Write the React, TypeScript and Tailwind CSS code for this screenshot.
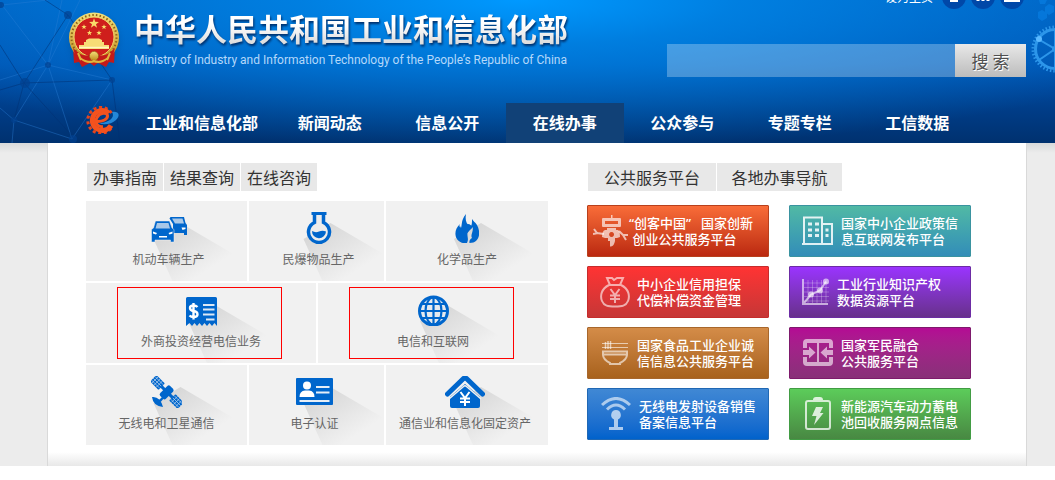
import type { ReactNode } from "react";
import clsx from "clsx";

const BLUE = "#0066cc";

/* ---------- header drawings ---------- */

const star = (cx: number, cy: number, r: number) =>
    Array.from({ length: 10 }, (_, i) => {
        const radius = i % 2 ? r * 0.4 : r;
        const a = (Math.PI / 5) * i - Math.PI / 2;
        return `${(cx + radius * Math.cos(a)).toFixed(2)},${(cy + radius * Math.sin(a)).toFixed(2)}`;
    }).join(" ");

const Emblem = () => (
    <svg width="52" height="56" viewBox="0 0 52 56" className="shrink-0 drop-shadow-md" aria-hidden="true">
        <defs>
            <linearGradient id="gold" x1="0" y1="0" x2="0" y2="1">
                <stop offset="0" stopColor="#f3e07a" />
                <stop offset="1" stopColor="#c08a1c" />
            </linearGradient>
        </defs>
        <path d="M5 36 L6 51 L11 50 L14 55 L22 51 L26 54 L30 51 L38 55 L41 50 L46 51 L47 36 Z" fill="#c41a1a" />
        <circle cx="26" cy="25.500" r="25" fill="url(#gold)" />
        <circle cx="26" cy="25.500" r="22.500" fill="none" stroke="#8f6414" strokeWidth="2" strokeDasharray="1.500 2.200" />
        <circle cx="26" cy="25" r="20" fill="#cf1f1c" stroke="#f0d468" strokeWidth="1" />
        <polygon points={star(26, 11.5, 5.2)} fill="#f8dc6a" />
        <polygon points={star(16, 15, 2.8)} fill="#f8dc6a" />
        <polygon points={star(36, 15, 2.8)} fill="#f8dc6a" />
        <polygon points={star(21.5, 21, 2.8)} fill="#f8dc6a" />
        <polygon points={star(31, 21, 2.8)} fill="#f8dc6a" />
        <path d="M18 28 L21 26.500 H31 L34 28 V30 H36 V33 H41 V37 H11 V33 H16 V30 H18 Z" fill="#f7dc76" />
        <path d="M11 35.500 H41" stroke="#fff6c0" strokeWidth="1.500" />
        <path d="M5 36 Q16 47 22 42 Q26 38 30 42 Q36 47 47 36 L45 43 Q36 51 26 48 Q16 51 7 43 Z" fill="#c41a1a" />
        <circle cx="26" cy="44" r="4.500" fill="url(#gold)" stroke="#8f6414" strokeWidth="1" strokeDasharray="1 1" />
        <path d="M12 46 Q20 52 26 49 Q32 52 40 46" fill="none" stroke="#e0b53e" strokeWidth="2" />
        <path d="M10 41 L13 48 M42 41 L39 48" stroke="#e0b53e" strokeWidth="2" />
    </svg>
);

const GearLogo = () => (
    <svg width="33" height="28" viewBox="0 0 33 28" fill="none" aria-hidden="true">
        <path d="M25.500 7 A13 13 0 1 0 26 21" stroke="#e8441a" strokeWidth="3" strokeDasharray="3 2.600" />
        <path d="M23 7 A10 10 0 1 0 25 19.500" stroke="#f4521e" strokeWidth="5" />
        <path d="M10 15.500 C17 16 22 13 21.500 9.500 C21 6.500 14 6 11 11.500 C8 17 12 21.500 17 20.500" stroke="#f4521e" strokeWidth="3" />
        <path d="M26 6 C34 5 34 10 30 14 C26 18 19 19 13 17.500 C21 17 30 12.500 26 6 Z" fill="#2387d8" />
    </svg>
);

const NetworkLines = () => (
    <svg className="absolute left-0 top-0 h-full" width="140" viewBox="0 0 140 143" aria-hidden="true">
        <g fill="none" stroke="#2a80d8" strokeOpacity="0.400">
            <path d="M2 5 L48 65 L80 0 M0 80 L48 65 L62 0 M48 65 L14 120 L0 108 M14 120 L72 139 L48 65 L112 80 L72 139 M2 5 L48 0 M14 120 L12 143" />
        </g>
        <g fill="none" stroke="#012f72" strokeOpacity="0.500">
            <path d="M24 83 L68 15 L45 0 M24 83 L0 45 M24 83 L0 90 M24 83 L112 80 L68 15 M24 83 L75 139 M24 83 L14 120 M112 80 L120 143" />
        </g>
        <g fill="#01408f" fillOpacity="0.700">
            <circle cx="25" cy="83" r="5" />
            <circle cx="68" cy="15" r="4" />
            <circle cx="48" cy="65" r="3" />
            <circle cx="14" cy="120" r="3" />
            <circle cx="112" cy="80" r="3" />
            <circle cx="73" cy="139" r="4" />
            <circle cx="1" cy="5" r="3" />
        </g>
    </svg>
);

const GearDecor = () => (
    <svg className="absolute right-0 top-0" width="30" height="80" viewBox="0 0 30 80" aria-hidden="true">
        <g fill="#0a8af0" fillOpacity="0.450">
            <path d="M20 7 l4 -3 l5 2 v6 l-5 3 l-4 -3 Z M13 12 l4 -2 l5 3 v5 l-5 3 l-4 -3 Z M14 0 h8 l-2 4 h-5 Z" />
        </g>
        <g fill="none" stroke="#2c96ea">
            <circle cx="30" cy="49" r="22" strokeWidth="3" strokeDasharray="1.500 1.960" />
            <circle cx="30" cy="49" r="19.500" strokeWidth="3" />
            <path d="M30 49 L13 39 M30 49 L14 60 M30 30 V68" strokeWidth="2" />
        </g>
        <circle cx="30" cy="49" r="3" fill="#2c96ea" />
        <circle cx="14" cy="39" r="3" fill="#5ab8ff" />
    </svg>
);

/* ---------- service icons ---------- */

const CarsIcon = () => (
    <svg width="36" height="32" viewBox="0 0 36 32">
        <path d="M19.500 5 H33 L34.500 11 L36 13 V23 H33 V21 H22 V12 L18.500 6.500 Z" fill={BLUE} />
        <path d="M21 6.500 H31.500 L33 11.500 H24 Z" fill="#a9c8e8" />
        <path d="M30.500 15.500 H34.500 V17 L31.500 18 Z" fill="#fff" />
        <path d="M4.500 9 H18.500 L21 16 L23 17.500 V30 H19.500 V28 H4 V30 H.500 V17.500 L2.500 16 Z" fill={BLUE} stroke="#f1f1f1" strokeWidth="0.500" />
        <path d="M6 11 H17.500 L19 16.500 H4.500 Z" fill="#a9c8e8" />
        <path d="M2 19.500 L6 21 L5 22.500 L2 21.500 Z M21.500 19.500 L17.500 21 L18.500 22.500 L21.500 21.500 Z M8 24 H16 V25.500 H8 Z" fill="#fff" />
    </svg>
);

const FlaskIcon = () => (
    <svg width="26" height="32" viewBox="0 0 26 32">
        <path d="M8.500 2 V10.500 A10.500 10.500 0 1 0 17.500 10.500 V2" fill="#ececec" stroke={BLUE} strokeWidth="3.500" />
        <path d="M5.500 0 H20.500 V3 H5.500 Z" fill={BLUE} />
        <path d="M6 19 Q9.500 21 13 19.500 Q16.500 18 20 19.500 A7 7 0 0 1 6 19 Z" fill={BLUE} />
    </svg>
);

const FlameIcon = () => (
    <svg width="24" height="32" viewBox="0 0 24 32">
        <path
            d="M11 2 C5 9 8 14 5 18 C4 16 4 14 5 12 C-2 18 -1 29 8 31 L12 31 C14 27 12 25 12.500 21 C15 17 17 17 17.500 15 C19 19 15 23 17 26 C15 27 14 29 14.500 31 C25 31 26 20 22 13 C20 10 18 9 17 7 C17 11 17 13 15.500 15 C11 12 10 8 11 2 Z"
            fill={BLUE}
        />
        <path d="M5 14 C-1 19 0 29 8 30.500 H11 C13 27 11.500 25 12 21 C15 17 17 17 17 14 L14 12 L8 13 L7 18 Z" fill={BLUE} />
    </svg>
);

const ReceiptIcon = () => (
    <svg width="31" height="32" viewBox="0 0 31 32">
        <path d="M1.500 3 H29.500 Q31 3 31 4.500 V32 L28.500 29 L26 32 L23.500 29 L21 32 L18.500 29 L16 32 L13.500 29 L11 32 L8.500 29 L6 32 L3.500 29 L0 32 V4.500 Q0 3 1.500 3 Z" fill={BLUE} />
        <path d="M11.500 13 Q10 11.500 7.500 11.500 Q4 11.500 4 14 Q4 16.500 7.500 17 Q11.500 17.500 11.500 20.500 Q11.500 23 7.500 23 Q5 23 3.500 21.500 M7.500 9 V25.500" fill="none" stroke="#fff" strokeWidth="2.400" />
        <path d="M17 11 H28.500 M17 15.500 H28.500 M17 20.500 H28.500 M20 25.500 H28.500" stroke="#dbe8f5" strokeWidth="2" />
    </svg>
);

const GlobeIcon = () => (
    <svg width="31" height="32" viewBox="0 0 31 32">
        <circle cx="15.500" cy="17" r="14" fill="#e6eaee" stroke={BLUE} strokeWidth="3" />
        <g fill="none" stroke={BLUE} strokeWidth="2.200">
            <ellipse cx="15.500" cy="17" rx="8" ry="13.500" />
            <path d="M15.500 3 V31 M2 17 H29 M4 10 H27 M4 24 H27" />
        </g>
    </svg>
);

const SatelliteIcon = () => (
    <svg width="31" height="32" viewBox="0 0 31 32">
        <g transform="rotate(45 16 16)">
            <rect x="-3.500" y="11.500" width="12" height="9" rx="1" fill={BLUE} />
            <rect x="23.500" y="11.500" width="12" height="9" rx="1" fill={BLUE} />
            <path d="M-3.500 13.500 H8.500 M-3.500 16 H8.500 M-3.500 18.500 H8.500 M-1 11.500 V20.500 M2 11.500 V20.500 M5 11.500 V20.500 M23.500 13.500 H35.500 M23.500 16 H35.500 M23.500 18.500 H35.500 M26.500 11.500 V20.500 M29.500 11.500 V20.500 M32.500 11.500 V20.500" stroke="#b9d3ee" strokeWidth="0.700" />
            <path d="M8 16 H24" stroke={BLUE} strokeWidth="3" />
            <rect x="12" y="9.500" width="8" height="14" rx="2" fill={BLUE} />
        </g>
        <path d="M1 21 Q9 20 12 31 Q2 30 1 21 Z M6 26 L12 20 L13.500 21.500 L8 28 Z" fill={BLUE} />
    </svg>
);

const IdCardIcon = () => (
    <svg width="37" height="32" viewBox="0 0 37 32">
        <rect y="2" width="37" height="27" rx="1" fill={BLUE} />
        <circle cx="11" cy="9.500" r="4" fill="#fff" />
        <path d="M3.500 21 Q3.500 15 9 14.500 H13 Q18.500 15 18.500 21 Z" fill="#fff" />
        <path d="M20 11 H33.500 M20 16.500 H33.500 M3.500 25 H33.500" stroke="#e6eef7" strokeWidth="2" />
    </svg>
);

const HouseIcon = () => (
    <svg width="40" height="32" viewBox="0 0 40 32">
        <path d="M2.500 18 L18 3 Q20 1 22 3 L37.500 18" fill="none" stroke={BLUE} strokeWidth="5" strokeLinecap="round" />
        <path d="M5 21 L20 8 L35 21 V30 Q35 32 33 32 H7 Q5 32 5 30 Z" fill={BLUE} />
        <path d="M4 23 L18.500 10.500 Q20 9 21.500 10.500 L36 23" fill="none" stroke="#f1f1f1" strokeWidth="1.500" />
        <path d="M15.500 16 L20 22 L24.500 16 M20 22 V30 M15 22.500 H25 M15 26 H25" fill="none" stroke="#fff" strokeWidth="2" />
    </svg>
);

/* ---------- platform icons ---------- */

const RobotIcon = () => (
    <svg width="36" height="32" viewBox="0 0 36 32">
        <path
            d="M18 0 h1.500 v3 H27 q1 0 1 1 v7 q0 1 -1 1 H10 q-1 0 -1 -1 V4 q0 -1 1 -1 h8 Z M12 6 v3 h13 V6 Z"
            fill="#fff"
            fillOpacity="0.650"
            fillRule="evenodd"
        />
        <path
            d="M14 13 h9 v2 h2 q2 1 2 7 l-3 1 h-2 v3 q-1 5 -4 5.500 h-1 V26 h-2 v-3 h-3 l-3 -1 q0 -6 3 -7 h2 Z M18.500 17 a2.500 2.500 0 1 0 .1 0 Z"
            fill="#fff"
            fillOpacity="0.650"
            fillRule="evenodd"
        />
        <path d="M11 19 L4 18 L1 14 M5 18 L0 19 M26 16 L30 20 L35 20 M30 20 L33 25" fill="none" stroke="#fff" strokeOpacity="0.650" strokeWidth="2" />
    </svg>
);

const BuildingIcon = () => (
    <svg width="32" height="30" viewBox="0 0 32 30" fill="none" stroke="#fff">
        <path d="M0 28 H31 M2 28 V1.500 H20 V28 M20 8 H30 V28" strokeWidth="2" strokeOpacity="0.850" />
        <path d="M6 8 h4 m3 0 h4 M6 14 h4 m3 0 h4 M6 19.500 h4 m3 0 h4 M23.500 14 h3 M23.500 19.500 h3" strokeWidth="3" strokeOpacity="0.850" />
    </svg>
);

const MoneyBagIcon = () => (
    <svg width="30" height="32" viewBox="0 0 30 32" fill="none" stroke="#fff" strokeOpacity="0.600" strokeWidth="2">
        <path d="M9 9 C1 13 0 20 2 25 C4 30 8 30.500 15 30.500 C22 30.500 26 30 28 25 C30 20 29 13 21 9 Z M10 9 L7 2 H12 L14 4 L17 2 H23 L20 9" />
        <path d="M10.500 13 L15 19 L19.500 13 M15 19 V27 M10 19.500 H20 M10 23 H20" />
    </svg>
);

const ChartIcon = () => (
    <svg width="28" height="28" viewBox="0 0 28 28" fill="none" stroke="#fff">
        <path d="M6 2 V25 M10.500 2 V25 M15 2 V25 M19.500 2 V25 M24 2 V25 M2 5 H27 M2 9.500 H27 M2 14 H27 M2 18.500 H27 M2 23 H27" strokeOpacity="0.250" />
        <path d="M1 1 V26 H26 M2 25 L9 16.500 L18 12.500 L24 3.500" strokeOpacity="0.600" strokeWidth="2" />
        <g fill="#fff" fillOpacity="0.600" stroke="none">
            <circle cx="9" cy="16.500" r="3" />
            <circle cx="18" cy="12.500" r="3" />
            <circle cx="24" cy="3.500" r="3" />
        </g>
    </svg>
);

const BowlIcon = () => (
    <svg width="28" height="26" viewBox="0 0 28 26" fill="none" stroke="#fff" strokeOpacity="0.600">
        <path d="M1 3.500 H27 M1 7.500 H27" strokeWidth="1.200" />
        <path d="M4.500 9 V2 M7 9 V1 M9.500 9 V1" strokeWidth="1.500" />
        <path d="M2 11.500 H26 V14.500 H2 Z M2 14.500 C2 19 5 21 9 23 V24 H19 V23 C23 21 26 19 26 14.500" strokeWidth="2" />
    </svg>
);

const MergeIcon = () => (
    <svg width="30" height="28" viewBox="0 0 30 28">
        <path d="M2 9 V4 Q2 2 4 2 H26 Q28 2 28 4 V9 M2 18 V23 Q2 25 4 25 H26 Q28 25 28 23 V18" fill="none" stroke="#fff" strokeOpacity="0.600" strokeWidth="4" />
        <path d="M14 4 h2 v19 h-2 Z M0 11 H6 V7.500 L12.500 13.500 L6 19.500 V16 H0 Z M30 11 H24 V7.500 L17.500 13.500 L24 19.500 V16 H30 Z" fill="#fff" fillOpacity="0.600" />
    </svg>
);

const SignalIcon = () => (
    <svg width="30" height="34" viewBox="0 0 30 34">
        <path d="M1 8 Q15 -5 29 8 M6 12.500 Q15 3.500 24 12.500" fill="none" stroke="#fff" strokeOpacity="0.600" strokeWidth="3" />
        <path d="M15 13 a5 5 0 0 1 2 9.500 V30 H22 V33 H8 V30 H13 V22.500 A5 5 0 0 1 15 13 Z" fill="#fff" fillOpacity="0.650" />
    </svg>
);

const BatteryIcon = () => (
    <svg width="26" height="34" viewBox="0 0 26 34">
        <rect x="1" y="4" width="24" height="28" rx="2" fill="none" stroke="#fff" strokeOpacity="0.750" strokeWidth="2" />
        <path d="M8 3 Q8 0 11 0 H15 Q18 0 18 3 Z M11 10 H18 L15 16 H18.500 L9 28 L11.500 19 H7 Z" fill="#fff" fillOpacity="0.800" />
    </svg>
);

/* ---------- data ---------- */

const navItems = ["新闻动态", "信息公开", "在线办事", "公众参与", "专题专栏", "工信数据"];

type Service = { label: string; icon: ReactNode; size: string; box?: string };

const serviceRows: Service[][] = [
    [
        { label: "机动车辆生产", icon: <CarsIcon />, size: "w-[161px] pl-1" },
        { label: "民爆物品生产", icon: <FlaskIcon />, size: "w-[135px] pl-1" },
        { label: "化学品生产", icon: <FlameIcon />, size: "flex-1" },
    ],
    [
        { label: "外商投资经营电信业务", icon: <ReceiptIcon />, size: "flex-1 pr-1", box: "border-[#ff0000] pl-1" },
        { label: "电信和互联网", icon: <GlobeIcon />, size: "flex-1 pr-1", box: "border-[#ff0000] pl-1" },
    ],
    [
        { label: "无线电和卫星通信", icon: <SatelliteIcon />, size: "w-[161px]" },
        { label: "电子认证", icon: <IdCardIcon />, size: "w-[135px] pr-1" },
        { label: "通信业和信息化固定资产", icon: <HouseIcon />, size: "flex-1 pr-1" },
    ],
];

const platforms = [
    { lines: ["“创客中国”\u00a0\u00a0\u00a0国家创新", "\u00a0创业公共服务平台"], icon: <RobotIcon />, tone: "from-[#f96c38] to-[#bb2810] border-[#b8401c]", space: "w-9" },
    { lines: ["国家中小企业政策信", "息互联网发布平台"], icon: <BuildingIcon />, tone: "from-[#51b9a4] to-[#338db8] border-[#3a93a0]", space: "w-[46px]" },
    { lines: ["中小企业信用担保", "代偿补偿资金管理"], icon: <MoneyBagIcon />, tone: "from-[#ff3333] to-[#c63636] border-[#c62c2c]", space: "w-[44px]" },
    { lines: ["工业行业知识产权", "数据资源平台"], icon: <ChartIcon />, tone: "from-[#9a33ff] to-[#68308c] border-[#6c2ca4]", space: "w-[42px]" },
    { lines: ["国家食品工业企业诚", "信信息公共服务平台"], icon: <BowlIcon />, tone: "from-[#d48c48] to-[#a8621c] border-[#a8672c]", space: "w-[44px]" },
    { lines: ["国家军民融合", "公共服务平台"], icon: <MergeIcon />, tone: "from-[#b40a94] to-[#883078] border-[#7e1a6c]", space: "w-[46px]" },
    { lines: ["无线电发射设备销售", "备案信息平台"], icon: <SignalIcon />, tone: "from-[#4088d4] to-[#0062cc] border-[#2068b4]", space: "w-[46px]" },
    { lines: ["新能源汽车动力蓄电", "池回收服务网点信息"], icon: <BatteryIcon />, tone: "from-[#5ccc5a] to-[#488842] border-[#429c44]", space: "w-[46px]" },
];

/* ---------- sections ---------- */

const RoundLink = ({ label, children }: { label: string; children: ReactNode }) => (
    <a href="#" aria-label={label} className="flex size-6 items-center justify-center rounded-full bg-[#0048a8]">
        <svg width="16" height="16" viewBox="0 0 16 16" fill="none" stroke="#fff" strokeWidth="2">
            {children}
        </svg>
    </a>
);

const Header = () => (
    <header className="relative overflow-hidden bg-[radial-gradient(ellipse_720px_150px_at_520px_0px,#0099ff_0%,#0088eacc_30%,#0070d000_100%),linear-gradient(to_bottom,#005cbc_0%,#0052b0_45%,#003c86_78%,#00316f_100%)]">
        <NetworkLines />
        <GearDecor />
        <div className="relative -mt-[15px] flex items-center justify-end gap-[5px] pr-[31px]">
            <a href="#" className="mr-1 text-xs leading-4 text-white">设为主页</a>
            <RoundLink label="移动版">
                <rect x="5" y="1" width="6" height="11" fill="#fff" />
                <path d="M6 10 H10" stroke="#0048a8" strokeWidth="1" />
            </RoundLink>
            <RoundLink label="订阅">
                <path d="M3 12 V9 M8 12 V8 M13 12 V4" strokeWidth="3" />
            </RoundLink>
            <RoundLink label="报刊">
                <path d="M1 6 V12 H15 V3 H5 V12 M8 6 H13 M8 9 H13" />
            </RoundLink>
        </div>
        <div className="relative flex justify-between pl-[68px] pr-[29px] pb-[26px]">
            <div className="flex items-start gap-3.5">
                <div className="pt-[3px]">
                    <Emblem />
                </div>
                <div className="whitespace-nowrap pt-px">
                    <h1 className="bg-linear-to-b from-white from-40% to-[#d8d8d8] bg-clip-text text-[31px] leading-9 font-bold text-transparent drop-shadow-[1px_2px_1px_#00306c]">
                        中华人民共和国工业和信息化部
                    </h1>
                    <p className="mt-1 font-['Roboto'] text-xs leading-5 text-[#b4d8fa]">
                        Ministry of Industry and Information Technology of the People’s Republic of China
                    </p>
                </div>
            </div>
            <form className="mt-[35px] flex h-[33px] w-[359px]">
                <input type="text" aria-label="搜索内容" className="min-w-0 flex-1 bg-white/27 px-2 text-sm text-white outline-none" />
                <button type="button" className="w-[71px] bg-linear-to-b from-[#e8e8e8] to-[#bcbcbc] text-[17px] text-[#505050] [text-shadow:1px_1px_0_#fff]">
                    搜 索
                </button>
            </form>
        </div>
        <nav className="relative flex h-10 items-stretch pr-[79px] pl-[86px] text-base font-bold whitespace-nowrap text-white">
            <span className="flex w-[60px] items-center pb-1.5">
                <GearLogo />
            </span>
            <a href="#" className="flex w-[125px] items-center pb-0.5">工业和信息化部</a>
            {navItems.map((item) => (
                <a
                    key={item}
                    href="#"
                    className={clsx("flex flex-1 items-center justify-center pb-0.5", item === "在线办事" && "bg-[#114177]")}
                >
                    {item}
                </a>
            ))}
        </nav>
    </header>
);

const TileShadow = () => (
    <svg className="absolute inset-0 h-full w-full" aria-hidden="true">
        <defs>
            <linearGradient id="shade" gradientUnits="userSpaceOnUse" x1="0" y1="22" x2="34" y2="74">
                <stop offset="0" stopColor="#d4d4d4" />
                <stop offset="1" stopColor="#f1f1f1" />
            </linearGradient>
        </defs>
        <svg x="50%" overflow="visible">
            <polygon points="-13,38 14,22 72,56 50,80 6,80" fill="url(#shade)" />
        </svg>
    </svg>
);

const ServiceTile = ({ label, icon, size, box }: Service) => (
    <a href="#" className={clsx("relative flex h-20 justify-center overflow-hidden bg-[#f1f1f1] pt-1", size)}>
        <TileShadow />
        <div className={clsx("relative flex h-[72px] w-full max-w-[165px] flex-col items-center border pt-1.5", box ?? "border-transparent")}>
            {icon}
            <span className="mt-[7px] text-xs leading-4 whitespace-nowrap text-[#666]">{label}</span>
        </div>
    </a>
);

const Tab = ({ children, className }: { children: ReactNode; className: string }) => (
    <button type="button" className={clsx("h-7 bg-[#e8e8e8] text-base leading-7 whitespace-nowrap text-[#333]", className)}>
        {children}
    </button>
);

const App = () => (
    <div className="bg-white font-['Noto_Sans_CJK_SC',sans-serif]">
        <Header />
        <div className="bg-[#ececec] bg-[linear-gradient(to_bottom,#d8dadb,#ececec_10px)] pl-[47px] pr-7">
            <main className="flex items-start gap-[39px] border-x border-[#d9d9d9] bg-white bg-[linear-gradient(to_top,#e8e8e8,#ffffff_14px)] pt-5 pr-[55px] pb-[21px] pl-[38px]">
                <section className="min-w-0 flex-[462]">
                    <div className="flex gap-px pl-px">
                        <Tab className="w-[76px]">办事指南</Tab>
                        <Tab className="w-[76px]">结果查询</Tab>
                        <Tab className="w-[76px]">在线咨询</Tab>
                    </div>
                    <div className="mt-2.5 flex flex-col gap-0.5">
                        {serviceRows.map((row) => (
                            <div key={row[0].label} className="flex gap-0.5">
                                {row.map((service) => (
                                    <ServiceTile key={service.label} {...service} />
                                ))}
                            </div>
                        ))}
                    </div>
                </section>
                <section className="min-w-0 flex-[384]">
                    <div className="flex gap-px pl-px">
                        <Tab className="w-32">公共服务平台</Tab>
                        <Tab className="w-[125px]">各地办事导航</Tab>
                    </div>
                    <div className="mt-3.5 grid grid-cols-2 gap-x-5 gap-y-[9px]">
                        {platforms.map(({ lines, icon, tone, space }) => (
                            <a
                                key={lines[0]}
                                href="#"
                                className={clsx("flex h-[52px] items-center rounded-[1px] border bg-linear-to-b pl-[5px] whitespace-nowrap text-white", tone)}
                            >
                                <span className={clsx("flex shrink-0 justify-center", space)}>{icon}</span>
                                <span className="font-['Noto_Sans','Noto_Sans_CJK_SC',sans-serif] text-[13px] leading-4 font-medium">
                                    {lines.map((line) => (
                                        <span key={line} className="block">{line}</span>
                                    ))}
                                </span>
                            </a>
                        ))}
                    </div>
                </section>
            </main>
        </div>
    </div>
);

export default App;
